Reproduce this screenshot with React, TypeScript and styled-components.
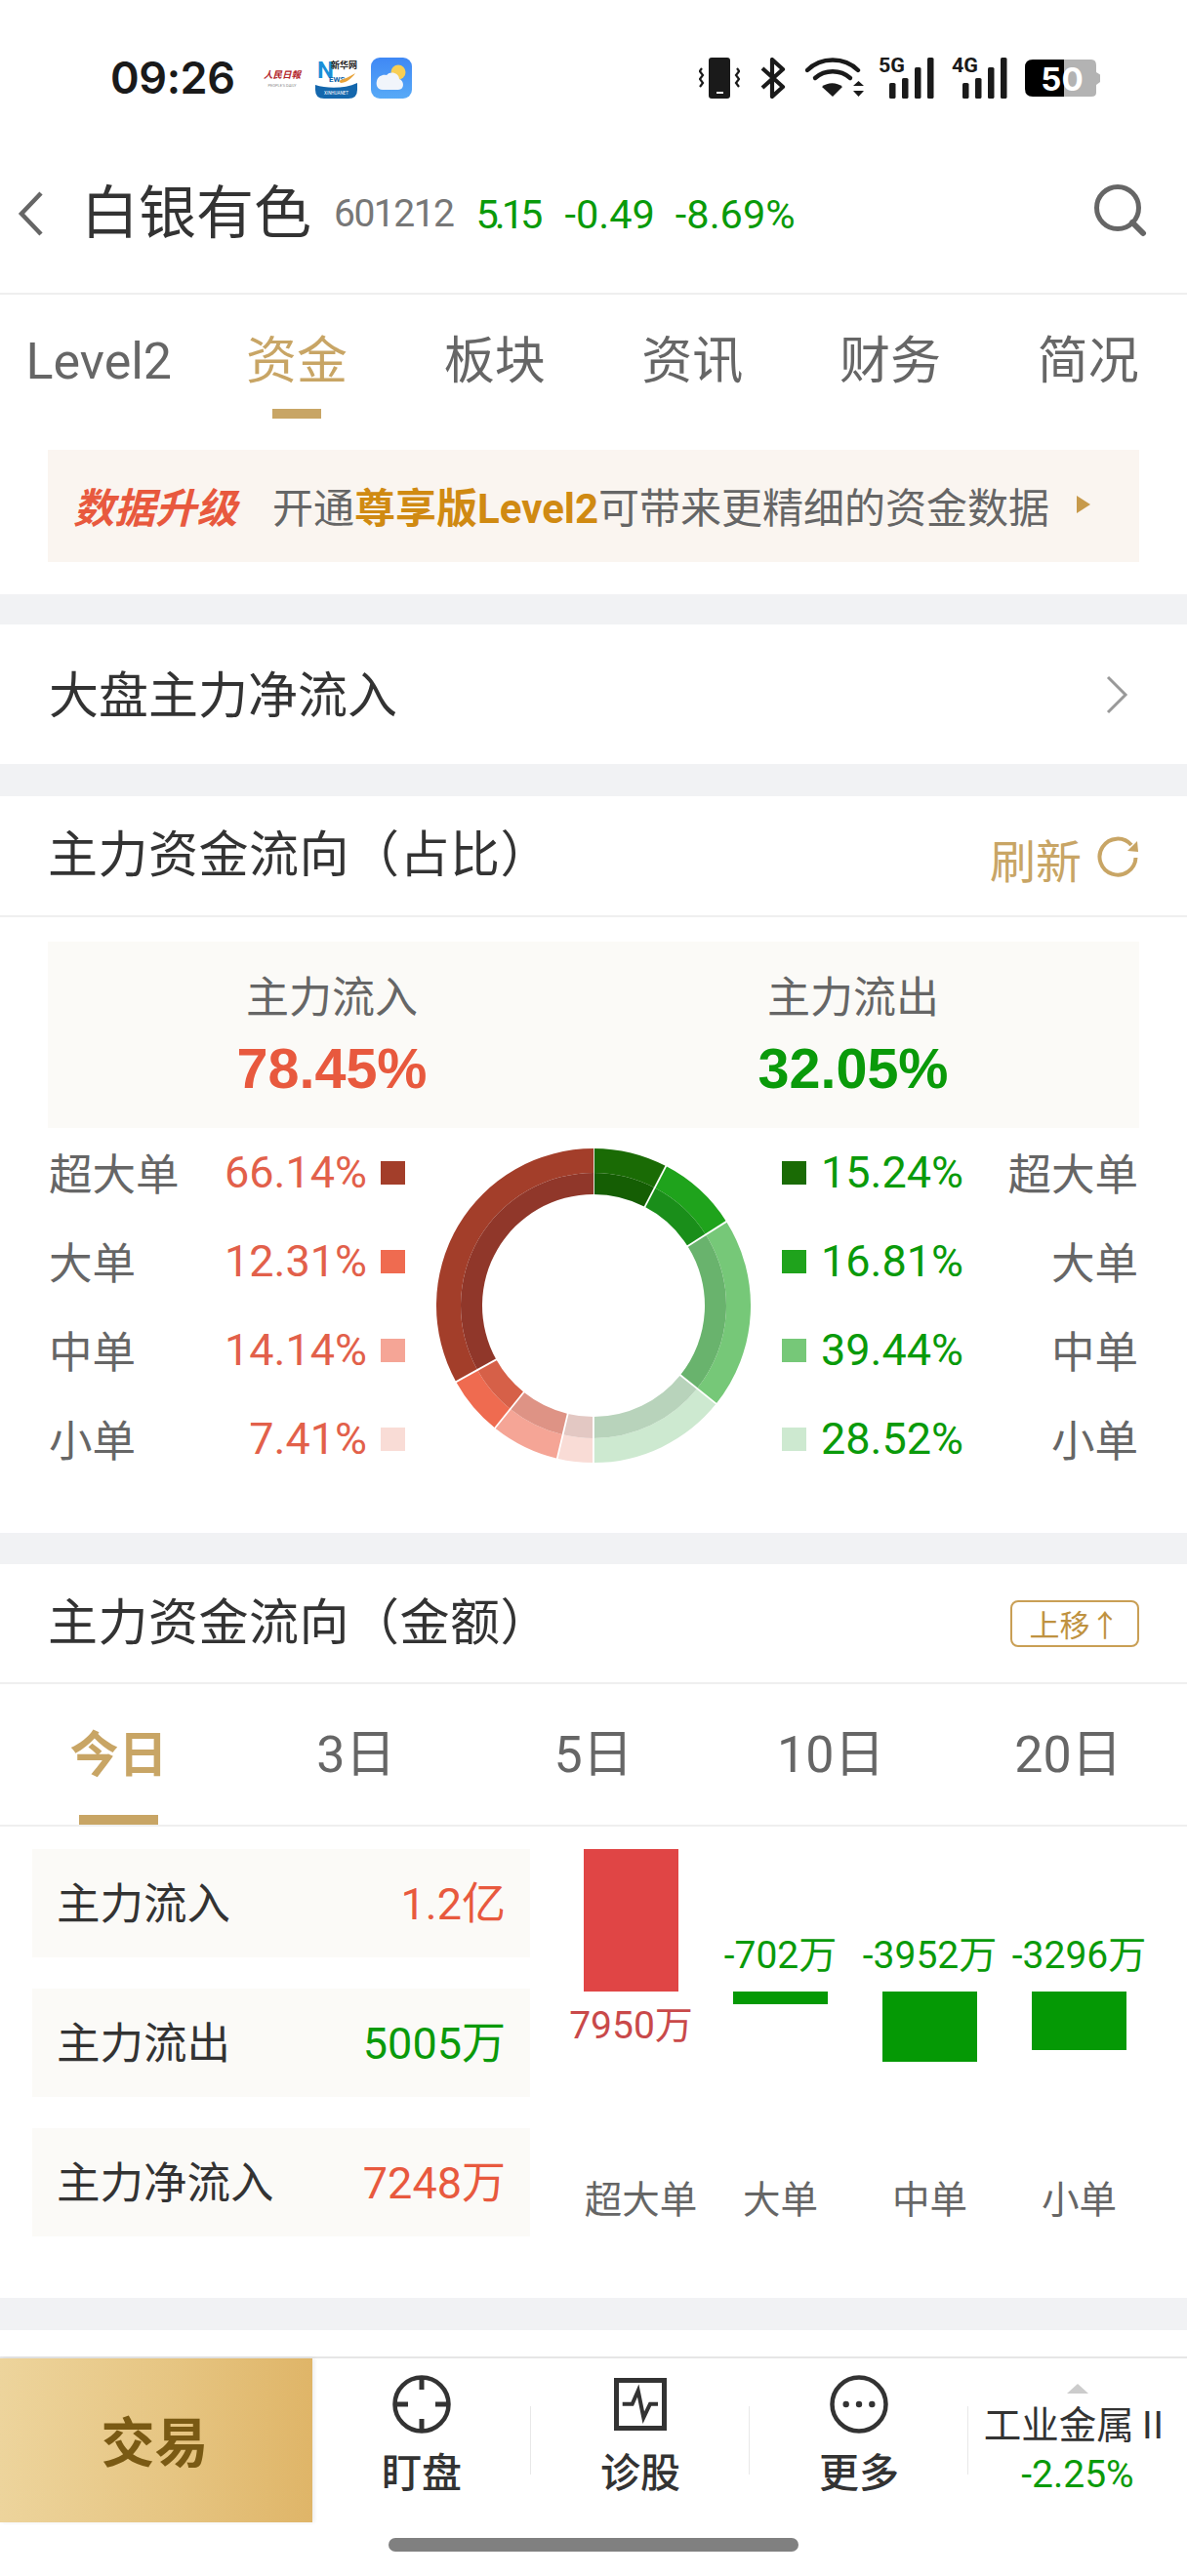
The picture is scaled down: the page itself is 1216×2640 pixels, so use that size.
import React from 'react'
import styled, { createGlobalStyle } from 'styled-components'

const GOLD = '#c8a565'
const GREEN = '#0a9a0a'
const RED = '#e8593e'

const GlobalStyle = createGlobalStyle`
  html, body {
    margin: 0;
    padding: 0;
    background: #fff;
    font-family: Roboto, "Noto Sans CJK SC", sans-serif;
    color: #333;
  }
  * { box-sizing: border-box; }
`

const Page = styled.div`
  width: 1216px;
  height: 2640px;
  overflow: hidden;
  background: #fff;
`

const StatusBar = styled.div`
  height: 130px;
  padding: 59px 88px 0 113px;
  display: flex;
  align-items: flex-start;
  justify-content: space-between;
`

const StatusLeft = styled.div`
  display: flex;
  align-items: center;
  height: 42px;
`

const Clock = styled.span`
  font-family: Inter, "Liberation Sans", sans-serif;
  font-weight: 600;
  font-size: 45px;
  line-height: 42px;
  letter-spacing: -0.4px;
  color: #1a1a1a;
  width: 157px;
`

const PaperLogo = styled.div`
  width: 38px;
  margin-right: 15px;
  display: flex;
  flex-direction: column;
  align-items: center;
  gap: 2px;
`

const PaperName = styled.span`
  font-size: 9.5px;
  line-height: 12px;
  color: #b3262c;
  font-weight: 700;
  font-style: italic;
  white-space: nowrap;
`

const PaperSub = styled.span`
  font-size: 4px;
  line-height: 5px;
  color: #8b8b8b;
  white-space: nowrap;
`

const StatusRight = styled.div`
  display: flex;
  align-items: flex-start;
`

const TopBar = styled.div`
  height: 172px;
  padding: 18px 41px 10px 18px;
  border-bottom: 2px solid #efefef;
  display: flex;
  align-items: center;
`

const StockName = styled.span`
  font-size: 59px;
  line-height: 70px;
  color: #333;
  margin-left: 38px;
`

const StockCode = styled.span`
  font-size: 39px;
  letter-spacing: -1.5px;
  color: #777;
  margin-left: 23px;
`

const Quote = styled.span<{ $gap: number; $spacing?: number }>`
  font-size: 41.500px;
  letter-spacing: ${p => p.$spacing ?? 0}px;
  color: ${GREEN};
  margin-left: ${p => p.$gap}px;
`

const TopSpacer = styled.div`
  flex: 1;
`

const Tabs = styled.div`
  display: grid;
  grid-template-columns: repeat(6, 1fr);
  height: 127px;
`

const Tab = styled.div<{ $active?: boolean }>`
  padding-top: 36px;
  font-size: 52px;
  line-height: 66px;
  text-align: center;
  color: ${p => (p.$active ? GOLD : '#666')};
  &::after {
    content: '';
    display: ${p => (p.$active ? 'block' : 'none')};
    width: 50px;
    height: 10px;
    margin: 15px auto 0;
    background: ${GOLD};
  }
`

const BannerWrap = styled.div`
  padding: 32px 49px 33px;
`

const Banner = styled.div`
  height: 115px;
  background: #faf5f0;
  padding: 0 0 3px 26px;
  display: flex;
  align-items: center;
  font-size: 42px;
  color: #666;
`

const BannerTag = styled.span`
  font-weight: 700;
  font-style: italic;
  color: #e8593e;
  margin-right: 36px;
`

const BannerStrong = styled.span`
  font-weight: 700;
  color: #d08a12;
`

const BannerArrow = styled.span`
  width: 0;
  height: 0;
  margin-left: 28px;
  border-left: 14px solid #c79a4b;
  border-top: 9px solid transparent;
  border-bottom: 9px solid transparent;
`

const Gap = styled.div<{ $h: number }>`
  height: ${p => p.$h}px;
  background: #f1f2f4;
`

const MarketRow = styled.div`
  height: 143px;
  padding: 0 60px 5px 50px;
  display: flex;
  align-items: center;
  justify-content: space-between;
  font-size: 51px;
  color: #333;
`

const SectionHead = styled.div<{ $h: number }>`
  height: ${p => p.$h}px;
  padding: 0 49px;
  border-bottom: 2px solid #efefef;
  display: flex;
  align-items: center;
  justify-content: space-between;
`

const SectionTitle = styled.span`
  font-size: 51px;
  letter-spacing: 0.5px;
  line-height: 60px;
  color: #333;
`

const Refresh = styled.span`
  display: flex;
  align-items: center;
  gap: 15px;
  font-size: 47px;
  color: ${GOLD};
`

const RefreshText = styled.span`
  padding-top: 5px;
`

const Summary = styled.div`
  height: 191px;
  margin: 25px 49px 0;
  background: #fbfaf7;
  display: grid;
  grid-template-columns: 582px 486px;
`

const SummaryCell = styled.div`
  padding: 30px 0 0;
  display: flex;
  flex-direction: column;
  align-items: center;
`

const SummaryLabel = styled.span`
  font-size: 44px;
  line-height: 56px;
  color: #666;
`

const SummaryValue = styled.span<{ $color: string }>`
  font-family: "Liberation Sans", sans-serif;
  font-weight: 700;
  font-size: 57.500px;
  line-height: 64px;
  margin-top: 12px;
  color: ${p => p.$color};
`

const Breakdown = styled.div`
  display: flex;
  justify-content: space-between;
  padding: 0 50px 51px 50px;
`

const Legend = styled.div`
  width: 365px;
`

const LegendRow = styled.div`
  height: 91px;
  display: flex;
  align-items: center;
  font-size: 44.500px;
`

const LegendLabel = styled.span`
  color: #666;
  flex: 1;
  padding-bottom: 3px;
`

const LegendLabelRight = styled(LegendLabel)`
  text-align: right;
`

const LegendValue = styled.span<{ $color: string }>`
  font-size: 45px;
  color: ${p => p.$color};
`

const Swatch = styled.i<{ $color: string }>`
  width: 25px;
  height: 24px;
  background: ${p => p.$color};
`

const SwatchLeft = styled(Swatch)`
  margin-left: 14px;
`

const SwatchRight = styled(Swatch)`
  margin-right: 15px;
`

const DonutBox = styled.div`
  width: 326px;
  height: 364px;
  display: flex;
  align-items: center;
  justify-content: center;
`

const MoveUp = styled.span`
  width: 132px;
  height: 48px;
  border: 2px solid #c99f55;
  border-radius: 8px;
  display: flex;
  align-items: center;
  justify-content: center;
  gap: 2px;
  font-size: 31px;
  color: #bf9240;
`

const Periods = styled.div`
  display: grid;
  grid-template-columns: repeat(5, 1fr);
  height: 146px;
  border-bottom: 2px solid #efefef;
`

const Period = styled.div<{ $active?: boolean }>`
  padding-top: 41px;
  display: flex;
  flex-direction: column;
  align-items: center;
  justify-content: space-between;
  font-size: ${p => (p.$active ? 50 : 52)}px;
  line-height: 64px;
  font-weight: ${p => (p.$active ? 700 : 400)};
  color: ${p => (p.$active ? GOLD : '#666')};
  &::after {
    content: '';
    display: block;
    width: 81px;
    height: 10px;
    background: ${p => (p.$active ? GOLD : 'transparent')};
  }
`

const FlowBody = styled.div`
  display: flex;
  height: 483px;
  padding: 23px 0 0 33px;
`

const FlowList = styled.div`
  width: 510px;
  margin-right: 27px;
  display: flex;
  flex-direction: column;
  gap: 32px;
`

const FlowRow = styled.div`
  height: 111px;
  padding: 0 25px 7px 25px;
  background: #fbfaf7;
  display: flex;
  align-items: center;
  justify-content: space-between;
  font-size: 44.500px;
`

const FlowValue = styled.span<{ $color: string }>`
  font-size: 45px;
  color: ${p => p.$color};
`

const Chart = styled.div`
  display: flex;
`

const ChartCol = styled.div`
  width: 153px;
  display: flex;
  flex-direction: column;
  align-items: center;
`

const ChartUp = styled.div`
  height: 146px;
  display: flex;
  flex-direction: column;
  justify-content: flex-end;
  align-items: center;
`

const ChartDown = styled.div`
  height: 191px;
  display: flex;
  flex-direction: column;
  align-items: center;
`

const Bar = styled.div<{ $color: string }>`
  width: 97px;
  background: ${p => p.$color};
`

const BarValue = styled.span<{ $color: string }>`
  font-size: 39px;
  line-height: 44px;
  white-space: nowrap;
  color: ${p => p.$color};
`

const BarValueBelow = styled(BarValue)`
  margin-top: 13px;
`

const BarValueAbove = styled(BarValue)`
  margin-bottom: 15px;
`

const AxisLabel = styled.span<{ $shift?: number }>`
  font-size: 38.500px;
  line-height: 46px;
  color: #666;
  white-space: nowrap;
  margin-left: ${p => p.$shift ?? 0}px;
`

const BottomBlank = styled.div`
  height: 27px;
`

const BottomBar = styled.div`
  height: 171px;
  border-top: 2px solid #e6e6e6;
  display: flex;
`

const TradeButton = styled.div`
  width: 320px;
  height: 168px;
  padding: 0 3px 5px 0;
  background: linear-gradient(90deg, #edd49c 0%, #e6c582 55%, #dfb568 100%);
  box-shadow: 2px 0 4px rgba(0, 0, 0, 0.08);
  display: flex;
  align-items: center;
  justify-content: center;
  font-size: 55px;
  font-weight: 700;
  color: #7a5a14;
`

const NavItem = styled.div`
  width: 224px;
  height: 168px;
  padding-top: 16px;
  position: relative;
  display: flex;
  flex-direction: column;
  align-items: center;
  &::after {
    content: '';
    position: absolute;
    right: 0;
    top: 49px;
    height: 70px;
    width: 1px;
    background: #e8e8e8;
  }
`

const NavLabel = styled.span`
  margin-top: 13px;
  font-size: 41px;
  line-height: 54px;
  font-weight: 500;
  color: #333;
`

const IndustryCell = styled.div`
  flex: 1;
  padding-top: 26px;
  display: flex;
  flex-direction: column;
  align-items: center;
`

const UpTriangle = styled.i`
  width: 0;
  height: 0;
  border-left: 11px solid transparent;
  border-right: 11px solid transparent;
  border-bottom: 10px solid #cccccc;
`

const IndustryName = styled.span`
  margin-top: 6px;
  font-size: 38.500px;
  line-height: 54px;
  white-space: nowrap;
  color: #333;
`

const IndustryChange = styled.span`
  font-size: 39px;
  line-height: 47px;
  color: ${GREEN};
`

const HomeBar = styled.div`
  width: 420px;
  height: 14px;
  margin: 15px auto 0;
  border-radius: 7px;
  background: #808080;
`

const VibrateIcon = () => (
  <svg width="42" height="42" viewBox="0 0 42 42" style={{ marginRight: 20 }}>
    <rect x="10" y="0" width="22" height="42" rx="3" fill="#1a1a1a" />
    <rect x="18" y="35" width="7" height="2" fill="#fff" />
    <path d="M3 11 L0.8 14 L4 18 L1 22 L4 26 L1 30" fill="none" stroke="#1a1a1a" strokeWidth="2.2" />
    <path d="M39 11 L41.2 14 L38 18 L41 22 L38 26 L41 30" fill="none" stroke="#1a1a1a" strokeWidth="2.2" />
  </svg>
)

const BluetoothIcon = () => (
  <svg width="28" height="42" viewBox="0 0 28 42" style={{ marginRight: 19 }}>
    <path d="M3 11 L24 30 L13 40 L13 2 L24 12 L3 31" fill="none" stroke="#1a1a1a" strokeWidth="4.2" strokeLinejoin="round" />
  </svg>
)

const WifiIcon = () => (
  <svg width="60" height="42" viewBox="0 0 60 42" style={{ marginRight: 15 }}>
    <path d="M2 13 C16 -1 40 -1 54 13" fill="none" stroke="#1a1a1a" strokeWidth="4.4" strokeLinecap="round" />
    <path d="M10 21 C20 12 36 12 46 21" fill="none" stroke="#1a1a1a" strokeWidth="4.4" strokeLinecap="round" />
    <path d="M17 31 L28 41 L38 31 C32 26 23 26 17 31 Z" fill="#1a1a1a" transform="translate(0 -1)" />
    <path d="M49 29 L54.5 24 L60 29 Z M49 34 L60 34 L54.5 40 Z" fill="#1a1a1a" />
  </svg>
)

const SignalIcon = ({ label }: { label: string }) => (
  <svg width="57" height="48" viewBox="0 -6 57 48" style={{ marginRight: 18, marginTop: -6 }}>
    <text x="0" y="15" fontFamily="Roboto, sans-serif" fontWeight="700" fontSize="21" fill="#1a1a1a" textLength="27" lengthAdjust="spacingAndGlyphs">
      {label}
    </text>
    <rect x="11" y="26" width="6.5" height="16" rx="1.6" fill="#1a1a1a" />
    <rect x="24" y="21" width="6.5" height="21" rx="1.6" fill="#1a1a1a" />
    <rect x="37" y="10" width="6.5" height="32" rx="1.6" fill="#1a1a1a" />
    <rect x="50" y="0" width="6.5" height="42" rx="1.6" fill="#1a1a1a" />
  </svg>
)

const BatteryIcon = () => (
  <svg width="78" height="42" viewBox="0 0 78 42">
    <path d="M40 2 H68 Q73 2 73 8 V36 Q73 40 68 40 H40 Z" fill="#b3b3b3" />
    <path d="M73 15 L77 17.500 V25 L73 28 Z" fill="#b3b3b3" />
    <path d="M40 2 H8 Q0 2 0 10 V32 Q0 40 8 40 H40 Z" fill="#000" />
    <text x="38" y="33.500" textAnchor="middle" fontFamily="Inter, sans-serif" fontWeight="700" fontSize="33" fill="#fff">
      50
    </text>
  </svg>
)

const NewsIcon = () => (
  <svg width="43" height="42" viewBox="0 0 43 42" style={{ marginRight: 14 }}>
    <rect width="43" height="42" rx="9" fill="#fff" />
    <path d="M0 28 C12 32 30 32 43 26 V33 Q43 42 34 42 H9 Q0 42 0 33 Z" fill="#1467ad" />
    <text x="2" y="21" fontFamily="Roboto, sans-serif" fontWeight="700" fontSize="24" fill="#1b8fd8">N</text>
    <text x="16" y="11" fontFamily="'Noto Sans CJK SC', sans-serif" fontWeight="700" fontSize="9" fill="#222">新华网</text>
    <text x="14" y="25" fontFamily="Roboto, sans-serif" fontWeight="700" fontSize="8" fill="#1467ad">EWS</text>
    <path d="M24 24 C30 22 36 19 41 16 C37 22 31 26 26 26 Z" fill="#e8a33a" />
    <text x="21.500" y="38" textAnchor="middle" fontFamily="Roboto, sans-serif" fontSize="4.500" fill="#fff">XINHUANET</text>
  </svg>
)

const WeatherIcon = () => (
  <svg width="42" height="42" viewBox="0 0 42 42">
    <defs>
      <linearGradient id="sky" x1="0" y1="0" x2="0" y2="1">
        <stop offset="0" stopColor="#3f88f5" />
        <stop offset="1" stopColor="#58aaf7" />
      </linearGradient>
    </defs>
    <rect width="42" height="42" rx="9" fill="url(#sky)" />
    <circle cx="28" cy="15" r="7.500" fill="#f8cf55" />
    <path d="M12 33 C6 33 5 27 6 24 C7 19 12 17 16 18 C20 13 29 16 29 22 C34 23 35 33 28 33 Z" fill="#f1f5fb" />
  </svg>
)

const BackIcon = () => (
  <svg width="27" height="48" viewBox="0 0 27 48">
    <path d="M24 3 L4 24 L24 45" fill="none" stroke="#666" strokeWidth="4.500" />
  </svg>
)

const SearchIcon = () => (
  <svg width="56" height="56" viewBox="0 0 56 56" style={{ marginTop: -8 }}>
    <circle cx="26" cy="26" r="21.500" fill="none" stroke="#666" strokeWidth="5" />
    <path d="M41 41 L52 52" stroke="#666" strokeWidth="6" strokeLinecap="round" />
  </svg>
)

const ChevronRight = () => (
  <svg width="24" height="40" viewBox="0 0 24 40" style={{ marginTop: 5 }}>
    <path d="M3 2 L21 20 L3 38" fill="none" stroke="#999" strokeWidth="3" />
  </svg>
)

const RefreshIcon = () => (
  <svg width="44" height="44" viewBox="0 0 44 44">
    <path d="M36 11 A18.500 18.500 0 1 0 40.500 24" fill="none" stroke={GOLD} strokeWidth="4" />
    <path d="M42 7 L43 18 L32 17 Z" fill={GOLD} />
  </svg>
)

const TargetIcon = () => (
  <svg width="60" height="62" viewBox="0 0 60 62">
    <circle cx="30" cy="31" r="27.500" fill="none" stroke="#333" strokeWidth="4.500" />
    <path d="M30 3 V16 M30 46 V59 M2 31 H16 M44 31 H58" stroke="#333" strokeWidth="5" />
  </svg>
)

const DiagnoseIcon = () => (
  <svg width="60" height="62" viewBox="0 0 60 62">
    <rect x="5.500" y="6.500" width="49" height="49" fill="none" stroke="#333" strokeWidth="5" />
    <path d="M11.700 30.700 H21.700 L27.700 17 L33.300 44.700 L40 30.700 H48" fill="none" stroke="#333" strokeWidth="4" />
  </svg>
)

const MoreIcon = () => (
  <svg width="60" height="62" viewBox="0 0 60 62">
    <circle cx="30" cy="31" r="27.500" fill="none" stroke="#333" strokeWidth="4.500" />
    <circle cx="16.700" cy="31" r="3.200" fill="#333" />
    <circle cx="30" cy="31" r="3.200" fill="#333" />
    <circle cx="43.300" cy="31" r="3.200" fill="#333" />
  </svg>
)

const polar = (r: number, deg: number) => {
  const a = (deg * Math.PI) / 180
  return [161 + r * Math.sin(a), 162 - r * Math.cos(a)]
}

const sector = (r0: number, r1: number, from: number, to: number) => {
  const [ax, ay] = polar(r1, from)
  const [bx, by] = polar(r1, to)
  const [cx, cy] = polar(r0, to)
  const [dx, dy] = polar(r0, from)
  const large = to - from > 180 ? 1 : 0
  return `M${ax} ${ay} A${r1} ${r1} 0 ${large} 1 ${bx} ${by} L${cx} ${cy} A${r0} ${r0} 0 ${large} 0 ${dx} ${dy} Z`
}

const donutParts = [
  { pct: 15.24, outer: '#1a6b05', inner: '#155e04' },
  { pct: 16.81, outer: '#1fa31c', inner: '#1a8e1a' },
  { pct: 39.44, outer: '#76c878', inner: '#69b36d' },
  { pct: 28.52, outer: '#cde9d0', inner: '#b8d3bb' },
  { pct: 7.41, outer: '#f9dcd6', inner: '#e3c8c3' },
  { pct: 14.14, outer: '#f5a596', inner: '#de9385' },
  { pct: 12.31, outer: '#ef6b50', inner: '#d66048' },
  { pct: 66.14, outer: '#a33e2a', inner: '#90372a' },
]

const Donut = () => {
  let angle = 0
  return (
    <svg width="322" height="324" viewBox="0 0 322 324">
      {donutParts.map(part => {
        const from = angle
        const to = angle + part.pct * 1.8
        angle = to
        const [lx0, ly0] = polar(112, from)
        const [lx1, ly1] = polar(163, from)
        return (
          <g key={part.pct}>
            <path d={sector(136, 161, from, to)} fill={part.outer} />
            <path d={sector(114, 136, from, to)} fill={part.inner} />
            <line x1={lx0} y1={ly0} x2={lx1} y2={ly1} stroke="#fff" strokeWidth="1.800" />
          </g>
        )
      })}
    </svg>
  )
}

const inflow = [
  { label: '超大单', value: '66.14%', color: '#a33e2a' },
  { label: '大单', value: '12.31%', color: '#ef6b50' },
  { label: '中单', value: '14.14%', color: '#f5a596' },
  { label: '小单', value: '7.41%', color: '#f9dcd6' },
]

const outflow = [
  { label: '超大单', value: '15.24%', color: '#1a6b05' },
  { label: '大单', value: '16.81%', color: '#1fa31c' },
  { label: '中单', value: '39.44%', color: '#76c878' },
  { label: '小单', value: '28.52%', color: '#cde9d0' },
]

const flows = [
  { label: '主力流入', value: '1.2亿', color: RED },
  { label: '主力流出', value: '5005万', color: GREEN },
  { label: '主力净流入', value: '7248万', color: RED },
]

const bars = [
  { label: '超大单', value: '7950万', height: 146, shift: 20 },
  { label: '大单', value: '-702万', height: 13 },
  { label: '中单', value: '-3952万', height: 72 },
  { label: '小单', value: '-3296万', height: 60 },
]

const App: React.FC = () => (
  <Page>
    <GlobalStyle />
    <StatusBar>
      <StatusLeft>
        <Clock>09:26</Clock>
        <PaperLogo>
          <PaperName>人民日報</PaperName>
          <PaperSub>PEOPLE'S DAILY</PaperSub>
        </PaperLogo>
        <NewsIcon />
        <WeatherIcon />
      </StatusLeft>
      <StatusRight>
        <VibrateIcon />
        <BluetoothIcon />
        <WifiIcon />
        <SignalIcon label="5G" />
        <SignalIcon label="4G" />
        <BatteryIcon />
      </StatusRight>
    </StatusBar>

    <TopBar>
      <BackIcon />
      <StockName>白银有色</StockName>
      <StockCode>601212</StockCode>
      <Quote $gap={23} $spacing={-4}>5.15</Quote>
      <Quote $gap={26}>-0.49</Quote>
      <Quote $gap={21}>-8.69%</Quote>
      <TopSpacer />
      <SearchIcon />
    </TopBar>

    <Tabs>
      <Tab>Level2</Tab>
      <Tab $active>资金</Tab>
      <Tab>板块</Tab>
      <Tab>资讯</Tab>
      <Tab>财务</Tab>
      <Tab>简况</Tab>
    </Tabs>

    <BannerWrap>
      <Banner>
        <BannerTag>数据升级</BannerTag>
        开通<BannerStrong>尊享版Level2</BannerStrong>可带来更精细的资金数据
        <BannerArrow />
      </Banner>
    </BannerWrap>

    <Gap $h={31} />
    <MarketRow>
      大盘主力净流入
      <ChevronRight />
    </MarketRow>
    <Gap $h={33} />

    <SectionHead $h={124}>
      <SectionTitle>主力资金流向（占比）</SectionTitle>
      <Refresh>
        <RefreshText>刷新</RefreshText>
        <RefreshIcon />
      </Refresh>
    </SectionHead>
    <Summary>
      <SummaryCell>
        <SummaryLabel>主力流入</SummaryLabel>
        <SummaryValue $color={RED}>78.45%</SummaryValue>
      </SummaryCell>
      <SummaryCell>
        <SummaryLabel>主力流出</SummaryLabel>
        <SummaryValue $color={GREEN}>32.05%</SummaryValue>
      </SummaryCell>
    </Summary>
    <Breakdown>
      <Legend>
        {inflow.map(row => (
          <LegendRow key={row.label}>
            <LegendLabel>{row.label}</LegendLabel>
            <LegendValue $color="#e2604a">{row.value}</LegendValue>
            <SwatchLeft $color={row.color} />
          </LegendRow>
        ))}
      </Legend>
      <DonutBox>
        <Donut />
      </DonutBox>
      <Legend>
        {outflow.map(row => (
          <LegendRow key={row.label}>
            <SwatchRight $color={row.color} />
            <LegendValue $color={GREEN}>{row.value}</LegendValue>
            <LegendLabelRight>{row.label}</LegendLabelRight>
          </LegendRow>
        ))}
      </Legend>
    </Breakdown>
    <Gap $h={32} />

    <SectionHead $h={123}>
      <SectionTitle>主力资金流向（金额）</SectionTitle>
      <MoveUp>上移↑</MoveUp>
    </SectionHead>
    <Periods>
      <Period $active>今日</Period>
      <Period>3日</Period>
      <Period>5日</Period>
      <Period>10日</Period>
      <Period>20日</Period>
    </Periods>
    <FlowBody>
      <FlowList>
        {flows.map(row => (
          <FlowRow key={row.label}>
            {row.label}
            <FlowValue $color={row.color}>{row.value}</FlowValue>
          </FlowRow>
        ))}
      </FlowList>
      <Chart>
        {bars.map((bar, i) => (
          <ChartCol key={bar.label}>
            <ChartUp>
              {i === 0 ? (
                <Bar $color="#e04545" style={{ height: bar.height }} />
              ) : (
                <BarValueAbove $color={GREEN}>{bar.value}</BarValueAbove>
              )}
            </ChartUp>
            <ChartDown>
              {i === 0 ? (
                <BarValueBelow $color="#c9494a">{bar.value}</BarValueBelow>
              ) : (
                <Bar $color="#059905" style={{ height: bar.height }} />
              )}
            </ChartDown>
            <AxisLabel $shift={bar.shift}>{bar.label}</AxisLabel>
          </ChartCol>
        ))}
      </Chart>
    </FlowBody>
    <Gap $h={33} />
    <BottomBlank />

    <BottomBar>
      <TradeButton>交易</TradeButton>
      <NavItem>
        <TargetIcon />
        <NavLabel>盯盘</NavLabel>
      </NavItem>
      <NavItem>
        <DiagnoseIcon />
        <NavLabel>诊股</NavLabel>
      </NavItem>
      <NavItem>
        <MoreIcon />
        <NavLabel>更多</NavLabel>
      </NavItem>
      <IndustryCell>
        <UpTriangle />
        <IndustryName>工业金属Ⅱ</IndustryName>
        <IndustryChange>-2.25%</IndustryChange>
      </IndustryCell>
    </BottomBar>
    <HomeBar />
  </Page>
)

export default App
